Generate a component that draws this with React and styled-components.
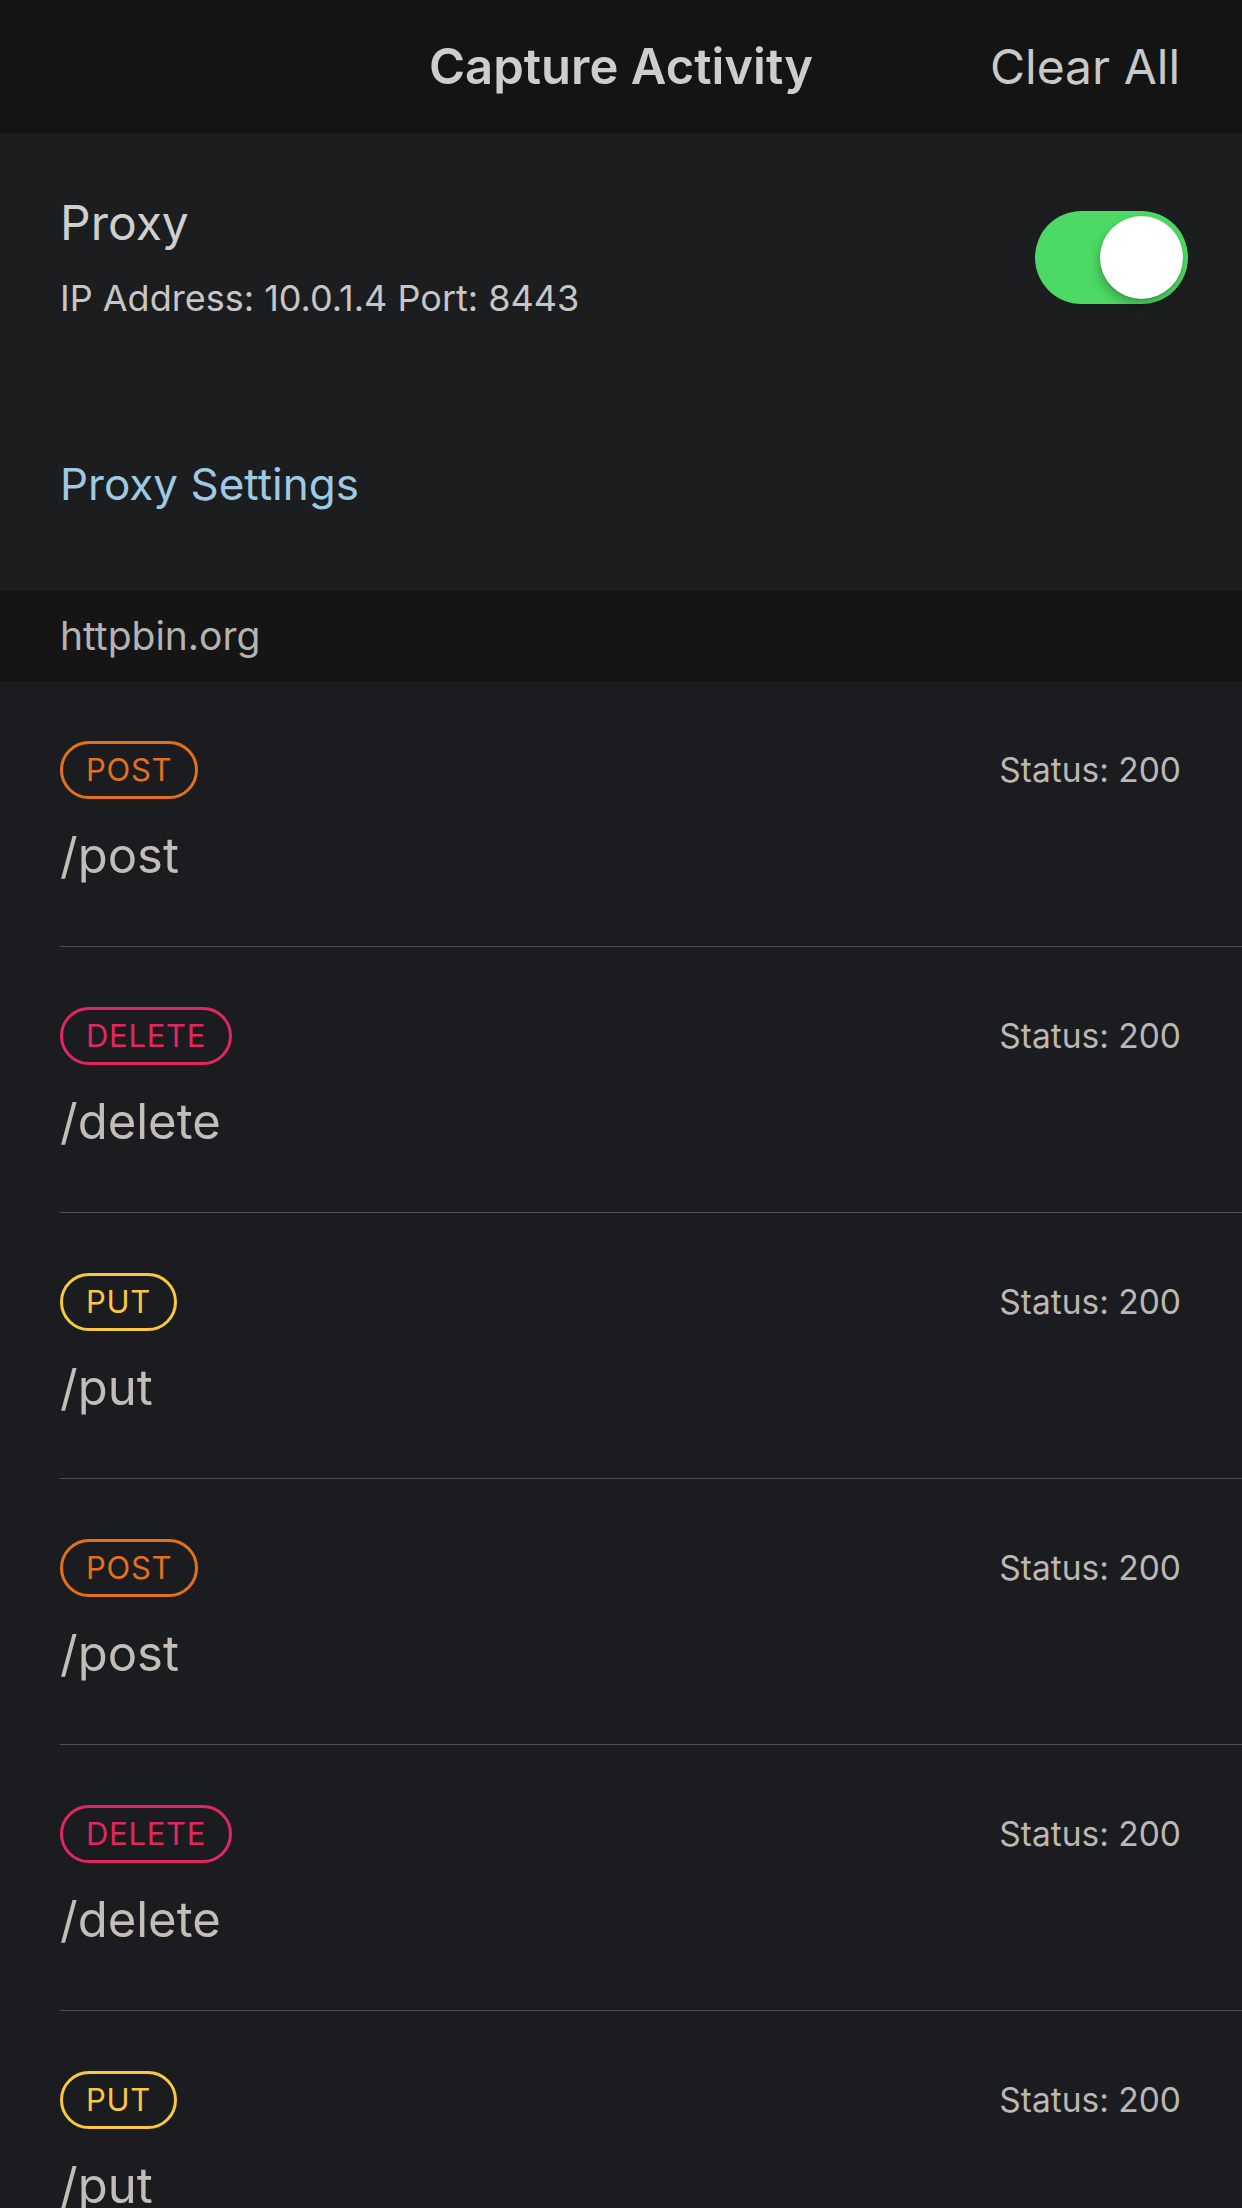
import React from "react";
import styled, { createGlobalStyle } from "styled-components";

const Global = createGlobalStyle`
  html, body { margin: 0; padding: 0; background: #1a1c20; }
  body { font-family: Inter, "Noto Sans", "Liberation Sans", sans-serif; -webkit-font-smoothing: antialiased; }
  * { box-sizing: border-box; }
`;

const Page = styled.div`
  width: 1242px;
  min-height: 2208px;
  background: #1a1c20;
  overflow: hidden;
`;

const Header = styled.header`
  height: 133px;
  background: #141414;
  display: grid;
  grid-template-columns: 1fr auto 1fr;
  align-items: center;
  padding: 0 62px 0 62px;
`;

const Title = styled.h1`
  grid-column: 2;
  margin: 0;
  font-size: 49px;
  font-weight: 600;
  color: #cdcdcd;
  line-height: 58px;
`;

const HeaderAction = styled.button`
  grid-column: 3;
  justify-self: end;
  background: none;
  border: none;
  padding: 0;
  font-family: inherit;
  font-size: 48px;
  font-weight: 400;
  color: #c9c9c9;
  line-height: 58px;
`;

const ProxySection = styled.section`
  background: #1c1d1f;
  padding: 62px 54px 80px 60px;
`;

const ProxyRow = styled.div`
  display: flex;
  align-items: center;
  justify-content: space-between;
`;

const ProxyText = styled.div`
  display: flex;
  flex-direction: column;
  gap: 26px;
`;

const ProxyName = styled.div`
  font-size: 48px;
  line-height: 56px;
  color: #cfcfcf;
`;

const ProxyAddr = styled.div`
  font-size: 36px;
  line-height: 42px;
  color: #c6c6c6;
`;

const Switch = styled.div`
  width: 153px;
  height: 93px;
  border-radius: 47px;
  background: ${(p) => (p.$on ? "#4cd964" : "#3a3a3c")};
  display: flex;
  align-items: center;
  justify-content: ${(p) => (p.$on ? "flex-end" : "flex-start")};
  padding: 0 5px;
`;

const Knob = styled.div`
  width: 83px;
  height: 83px;
  border-radius: 50%;
  background: #ffffff;
  box-shadow: -2px 6px 10px rgba(0, 0, 0, 0.22), 0 1px 2px rgba(0, 0, 0, 0.15);
`;

const SettingsLink = styled.a`
  display: block;
  margin-top: 138px;
  font-size: 44px;
  line-height: 54px;
  color: #9dcae2;
  text-decoration: none;
`;

const GroupHeader = styled.div`
  height: 90px;
  background: #151515;
  padding: 21px 60px 0;
  font-size: 39px;
  line-height: 48px;
  color: #b3b3b3;
`;

const List = styled.div`
  background: #1a1c20;
`;

const Row = styled.div`
  margin-left: 60px;
  padding: 60px 61px 60px 0;
  border-bottom: 1px solid #4b4e55;
`;

const RowTop = styled.div`
  display: flex;
  align-items: center;
  justify-content: space-between;
  height: 58px;
`;

const colors = {
  POST: "#e3701c",
  DELETE: "#e0275f",
  PUT: "#f8c842",
};

const Badge = styled.span`
  display: inline-flex;
  align-items: center;
  height: 58px;
  padding: 0 23px;
  border: 3px solid ${(p) => colors[p.$method]};
  border-radius: 29px;
  color: ${(p) => colors[p.$method]};
  font-size: 31px;
  line-height: 52px;
  letter-spacing: 0.7px;
`;

const Status = styled.span`
  font-size: 33.5px;
  line-height: 40px;
  color: #bcb7b2;
`;

const Path = styled.div`
  margin-top: 27px;
  font-size: 49px;
  line-height: 60px;
  color: #c3bcb7;
`;

const requests = [
  { method: "POST", path: "/post", status: 200 },
  { method: "DELETE", path: "/delete", status: 200 },
  { method: "PUT", path: "/put", status: 200 },
  { method: "POST", path: "/post", status: 200 },
  { method: "DELETE", path: "/delete", status: 200 },
  { method: "PUT", path: "/put", status: 200 },
];

export default function App() {
  return (
    <Page>
      <Global />
      <Header>
        <Title>Capture Activity</Title>
        <HeaderAction>Clear All</HeaderAction>
      </Header>
      <ProxySection>
        <ProxyRow>
          <ProxyText>
            <ProxyName>Proxy</ProxyName>
            <ProxyAddr>IP Address: 10.0.1.4 Port: 8443</ProxyAddr>
          </ProxyText>
          <Switch $on>
            <Knob />
          </Switch>
        </ProxyRow>
        <SettingsLink>Proxy Settings</SettingsLink>
      </ProxySection>
      <GroupHeader>httpbin.org</GroupHeader>
      <List>
        {requests.map((r, i) => (
          <Row key={i}>
            <RowTop>
              <Badge $method={r.method}>{r.method}</Badge>
              <Status>Status: {r.status}</Status>
            </RowTop>
            <Path>{r.path}</Path>
          </Row>
        ))}
      </List>
    </Page>
  );
}
